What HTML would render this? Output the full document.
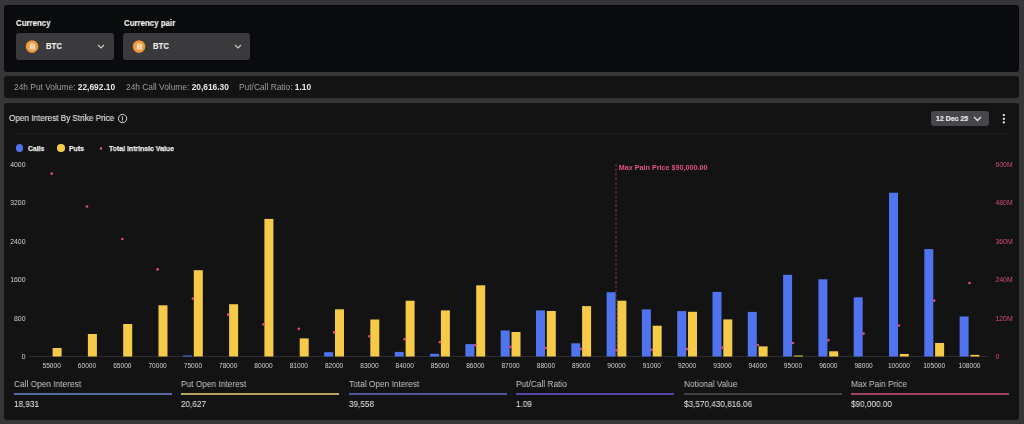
<!DOCTYPE html>
<html><head><meta charset="utf-8">
<style>
html,body{margin:0;padding:0;}
body{width:1024px;height:424px;background:#363638;position:relative;overflow:hidden;font-family:"Liberation Sans",sans-serif;}
.p{position:absolute;border-radius:3px;}
.t{position:absolute;white-space:nowrap;line-height:1;will-change:transform;}
svg{will-change:transform;}
.dd{position:absolute;top:33.3px;height:26.4px;background:#3a3a3c;border-radius:3px;}
svg text.xl{font-family:"Liberation Sans",sans-serif;font-size:6.6px;fill:#d2d2d2;}
svg text.yl{font-family:"Liberation Sans",sans-serif;font-size:6.9px;fill:#d2d2d2;}
svg text.yr{font-family:"Liberation Sans",sans-serif;font-size:6.85px;fill:#d24c74;}
svg text.mp{font-family:"Liberation Sans",sans-serif;font-size:8px;font-weight:bold;fill:#e4527c;}
</style></head><body>
<div class="p" style="left:4px;top:5px;width:1015px;height:66.5px;background:#0a0b0d"></div>
<div class="p" style="left:4px;top:76px;width:1015px;height:21.8px;background:#131313"></div>
<div class="p" style="left:4px;top:103px;width:1015px;height:316.6px;background:#131313"></div>
<div class="t" style="left:15.80px;top:18.81px;font-size:9.2px;font-weight:bold;-webkit-text-stroke:0.2px #f0f0f0;color:#f0f0f0;transform:scaleX(0.857);transform-origin:0 0;">Currency</div>
<div class="t" style="left:123.50px;top:18.81px;font-size:9.2px;font-weight:bold;-webkit-text-stroke:0.2px #f0f0f0;color:#f0f0f0;transform:scaleX(0.857);transform-origin:0 0;">Currency pair</div>
<div class="dd" style="left:16px;width:98px"></div>
<div class="dd" style="left:123px;width:127px"></div>
<div style="position:absolute;left:25px;top:39px;line-height:0"><svg width="14" height="15" viewBox="0 0 14 15"><defs><radialGradient id="bg1" cx="50%" cy="50%" r="50%"><stop offset="0%" stop-color="#f8bc7c"/><stop offset="60%" stop-color="#f0a04c"/><stop offset="100%" stop-color="#e88e34"/></radialGradient></defs><circle cx="7" cy="7.6" r="6.35" fill="url(#bg1)"/><text x="0" y="0" transform="translate(7.1,10.5) rotate(8)" text-anchor="middle" font-family="Liberation Sans, sans-serif" font-weight="bold" font-size="8.2" fill="#fdebd6">B</text></svg></div>
<div style="position:absolute;left:132.3px;top:39px;line-height:0"><svg width="14" height="15" viewBox="0 0 14 15"><defs><radialGradient id="bg2" cx="50%" cy="50%" r="50%"><stop offset="0%" stop-color="#f8bc7c"/><stop offset="60%" stop-color="#f0a04c"/><stop offset="100%" stop-color="#e88e34"/></radialGradient></defs><circle cx="7" cy="7.6" r="6.35" fill="url(#bg2)"/><text x="0" y="0" transform="translate(7.1,10.5) rotate(8)" text-anchor="middle" font-family="Liberation Sans, sans-serif" font-weight="bold" font-size="8.2" fill="#fdebd6">B</text></svg></div>
<div class="t" style="left:45.60px;top:42.23px;font-size:9.3px;font-weight:bold;-webkit-text-stroke:0.2px #eeeeee;color:#eeeeee;transform:scaleX(0.83);transform-origin:0 0;">BTC</div>
<div class="t" style="left:152.70px;top:42.23px;font-size:9.3px;font-weight:bold;-webkit-text-stroke:0.2px #eeeeee;color:#eeeeee;transform:scaleX(0.83);transform-origin:0 0;">BTC</div>
<div style="position:absolute;left:97px;top:44px;line-height:0"><svg width="8" height="5" viewBox="0 0 8 5"><path d="M1 1 L4 4 L7 1" stroke="#c8c8c8" stroke-width="1.2" fill="none"/></svg></div>
<div style="position:absolute;left:233.5px;top:44px;line-height:0"><svg width="8" height="5" viewBox="0 0 8 5"><path d="M1 1 L4 4 L7 1" stroke="#c8c8c8" stroke-width="1.2" fill="none"/></svg></div>
<div class="t" style="left:13.75px;top:83.49px;font-size:8.4px;color:#9c9c9c;">24h Put Volume: <span style="color:#e8e8e8;font-weight:bold">22,692.10</span></div>
<div class="t" style="left:125.70px;top:83.49px;font-size:8.4px;color:#9c9c9c;">24h Call Volume: <span style="color:#e8e8e8;font-weight:bold">20,616.30</span></div>
<div class="t" style="left:239.00px;top:83.49px;font-size:8.4px;color:#9c9c9c;">Put/Call Ratio: <span style="color:#e8e8e8;font-weight:bold">1.10</span></div>
<div class="t" style="left:8.70px;top:114.42px;font-size:8.6px;-webkit-text-stroke:0.1px #e8e8e8;color:#e8e8e8;transform:scaleX(0.95);transform-origin:0 0;">Open Interest By Strike Price</div>
<svg style="position:absolute;left:117px;top:113.2px" width="11" height="11" viewBox="0 0 11 11"><circle cx="5.55" cy="5.55" r="4.15" fill="none" stroke="#d4d4d4" stroke-width="1"/><rect x="5.1" y="3.3" width="0.9" height="4.0" fill="#d4d4d4"/><rect x="5.1" y="7.7" width="0.9" height="0.9" fill="#d4d4d4"/></svg>
<div style="position:absolute;left:931px;top:111px;width:58px;height:15px;background:#46474b;border-radius:3px"></div>
<div class="t" style="left:936.30px;top:114.57px;font-size:7.6px;font-weight:bold;-webkit-text-stroke:0.2px #ececec;color:#ececec;transform:scaleX(0.92);transform-origin:0 0;">12 Dec 25</div>
<svg style="position:absolute;left:973px;top:116px" width="9" height="6" viewBox="0 0 9 6"><path d="M1 1 L4.5 4.5 L8 1" stroke="#e4e4e4" stroke-width="1.3" fill="none"/></svg>
<svg style="position:absolute;left:0;top:100px" width="1024" height="40" viewBox="0 100 1024 40"><circle cx="1003.8" cy="115.1" r="1.15" fill="#f0f0f0"/><circle cx="1003.8" cy="118.8" r="1.15" fill="#f0f0f0"/><circle cx="1003.8" cy="122.4" r="1.15" fill="#f0f0f0"/><line x1="14" y1="133.9" x2="1009" y2="133.9" stroke="#222224" stroke-width="1"/></svg>
<div style="position:absolute;left:15.8px;top:144.3px;width:7.5px;height:7.5px;border-radius:50%;background:#4f74ee"></div>
<div class="t" style="left:27.90px;top:145.17px;font-size:7.6px;font-weight:bold;-webkit-text-stroke:0.25px #ececec;color:#ececec;transform:scaleX(0.9);transform-origin:0 0;">Calls</div>
<div style="position:absolute;left:57px;top:144.3px;width:7.5px;height:7.5px;border-radius:50%;background:#f5ca48"></div>
<div class="t" style="left:68.90px;top:145.17px;font-size:7.6px;font-weight:bold;-webkit-text-stroke:0.25px #ececec;color:#ececec;transform:scaleX(0.91);transform-origin:0 0;">Puts</div>
<div style="position:absolute;left:99.8px;top:147.2px;width:2.4px;height:2.4px;border-radius:50%;background:#e24d7c"></div>
<div class="t" style="left:109.30px;top:145.17px;font-size:7.6px;font-weight:bold;-webkit-text-stroke:0.25px #ececec;color:#ececec;transform:scaleX(0.913);transform-origin:0 0;">Total Intrinsic Value</div>
<svg style="position:absolute;left:0;top:0" width="1024" height="424" viewBox="0 0 1024 424">
<line x1="29" y1="356.5" x2="988" y2="356.5" stroke="#2c2c2e" stroke-width="1"/>
<line x1="616.0" y1="164" x2="616.0" y2="356.5" stroke="#8e3552" stroke-width="1" stroke-dasharray="2.5,2"/>
<rect x="52.60" y="348.00" width="9.0" height="8.50" fill="#f5ca48"/>
<rect x="87.90" y="334.00" width="9.0" height="22.50" fill="#f5ca48"/>
<rect x="123.20" y="324.00" width="9.0" height="32.50" fill="#f5ca48"/>
<rect x="158.50" y="305.30" width="9.0" height="51.20" fill="#f5ca48"/>
<rect x="183.00" y="355.50" width="9.0" height="1.00" fill="#4f74ee"/>
<rect x="193.80" y="270.20" width="9.0" height="86.30" fill="#f5ca48"/>
<rect x="229.10" y="304.20" width="9.0" height="52.30" fill="#f5ca48"/>
<rect x="264.40" y="218.90" width="9.0" height="137.60" fill="#f5ca48"/>
<rect x="299.70" y="338.40" width="9.0" height="18.10" fill="#f5ca48"/>
<rect x="324.20" y="352.20" width="9.0" height="4.30" fill="#4f74ee"/>
<rect x="335.00" y="309.30" width="9.0" height="47.20" fill="#f5ca48"/>
<rect x="370.30" y="319.50" width="9.0" height="37.00" fill="#f5ca48"/>
<rect x="394.80" y="351.90" width="9.0" height="4.60" fill="#4f74ee"/>
<rect x="405.60" y="300.70" width="9.0" height="55.80" fill="#f5ca48"/>
<rect x="430.10" y="353.80" width="9.0" height="2.70" fill="#4f74ee"/>
<rect x="440.90" y="310.40" width="9.0" height="46.10" fill="#f5ca48"/>
<rect x="465.40" y="344.10" width="9.0" height="12.40" fill="#4f74ee"/>
<rect x="476.20" y="285.30" width="9.0" height="71.20" fill="#f5ca48"/>
<rect x="500.70" y="330.50" width="9.0" height="26.00" fill="#4f74ee"/>
<rect x="511.50" y="332.00" width="9.0" height="24.50" fill="#f5ca48"/>
<rect x="536.00" y="310.40" width="9.0" height="46.10" fill="#4f74ee"/>
<rect x="546.80" y="311.00" width="9.0" height="45.50" fill="#f5ca48"/>
<rect x="571.30" y="343.30" width="9.0" height="13.20" fill="#4f74ee"/>
<rect x="582.10" y="306.10" width="9.0" height="50.40" fill="#f5ca48"/>
<rect x="606.60" y="292.20" width="9.0" height="64.30" fill="#4f74ee"/>
<rect x="617.40" y="300.70" width="9.0" height="55.80" fill="#f5ca48"/>
<rect x="641.90" y="309.40" width="9.0" height="47.10" fill="#4f74ee"/>
<rect x="652.70" y="325.70" width="9.0" height="30.80" fill="#f5ca48"/>
<rect x="677.20" y="311.10" width="9.0" height="45.40" fill="#4f74ee"/>
<rect x="688.00" y="311.80" width="9.0" height="44.70" fill="#f5ca48"/>
<rect x="712.50" y="291.90" width="9.0" height="64.60" fill="#4f74ee"/>
<rect x="723.30" y="319.40" width="9.0" height="37.10" fill="#f5ca48"/>
<rect x="747.80" y="311.90" width="9.0" height="44.60" fill="#4f74ee"/>
<rect x="758.60" y="346.40" width="9.0" height="10.10" fill="#f5ca48"/>
<rect x="783.10" y="274.80" width="9.0" height="81.70" fill="#4f74ee"/>
<rect x="793.90" y="355.50" width="9.0" height="1.00" fill="#f5ca48"/>
<rect x="818.40" y="279.30" width="9.0" height="77.20" fill="#4f74ee"/>
<rect x="829.20" y="351.30" width="9.0" height="5.20" fill="#f5ca48"/>
<rect x="853.70" y="297.30" width="9.0" height="59.20" fill="#4f74ee"/>
<rect x="889.00" y="192.70" width="9.0" height="163.80" fill="#4f74ee"/>
<rect x="899.80" y="354.00" width="9.0" height="2.50" fill="#f5ca48"/>
<rect x="924.30" y="249.10" width="9.0" height="107.40" fill="#4f74ee"/>
<rect x="935.10" y="343.00" width="9.0" height="13.50" fill="#f5ca48"/>
<rect x="959.60" y="316.50" width="9.0" height="40.00" fill="#4f74ee"/>
<rect x="970.40" y="354.90" width="9.0" height="1.60" fill="#f5ca48"/>
<circle cx="51.70" cy="173.70" r="1.35" fill="#dc4c78"/>
<circle cx="87.00" cy="206.50" r="1.35" fill="#dc4c78"/>
<circle cx="122.30" cy="239.00" r="1.35" fill="#dc4c78"/>
<circle cx="157.60" cy="269.40" r="1.35" fill="#dc4c78"/>
<circle cx="192.90" cy="298.60" r="1.35" fill="#dc4c78"/>
<circle cx="228.20" cy="314.70" r="1.35" fill="#dc4c78"/>
<circle cx="263.50" cy="324.30" r="1.35" fill="#dc4c78"/>
<circle cx="298.80" cy="328.80" r="1.35" fill="#dc4c78"/>
<circle cx="334.10" cy="332.40" r="1.35" fill="#dc4c78"/>
<circle cx="369.40" cy="336.30" r="1.35" fill="#dc4c78"/>
<circle cx="404.70" cy="339.20" r="1.35" fill="#dc4c78"/>
<circle cx="440.00" cy="342.20" r="1.35" fill="#dc4c78"/>
<circle cx="475.30" cy="345.10" r="1.35" fill="#dc4c78"/>
<circle cx="510.60" cy="346.90" r="1.35" fill="#dc4c78"/>
<circle cx="545.90" cy="348.00" r="1.35" fill="#dc4c78"/>
<circle cx="581.20" cy="349.00" r="1.35" fill="#dc4c78"/>
<circle cx="616.50" cy="350.30" r="1.35" fill="#dc4c78"/>
<circle cx="651.80" cy="349.80" r="1.35" fill="#dc4c78"/>
<circle cx="687.10" cy="349.10" r="1.35" fill="#dc4c78"/>
<circle cx="722.40" cy="347.70" r="1.35" fill="#dc4c78"/>
<circle cx="757.70" cy="345.10" r="1.35" fill="#dc4c78"/>
<circle cx="793.00" cy="343.00" r="1.35" fill="#dc4c78"/>
<circle cx="828.30" cy="340.20" r="1.35" fill="#dc4c78"/>
<circle cx="863.60" cy="333.60" r="1.35" fill="#dc4c78"/>
<circle cx="898.90" cy="325.50" r="1.35" fill="#dc4c78"/>
<circle cx="934.20" cy="300.60" r="1.35" fill="#dc4c78"/>
<circle cx="969.50" cy="283.00" r="1.35" fill="#dc4c78"/>
<text x="51.70" y="368.2" text-anchor="middle" class="xl">55000</text>
<text x="87.00" y="368.2" text-anchor="middle" class="xl">60000</text>
<text x="122.30" y="368.2" text-anchor="middle" class="xl">65000</text>
<text x="157.60" y="368.2" text-anchor="middle" class="xl">70000</text>
<text x="192.90" y="368.2" text-anchor="middle" class="xl">75000</text>
<text x="228.20" y="368.2" text-anchor="middle" class="xl">78000</text>
<text x="263.50" y="368.2" text-anchor="middle" class="xl">80000</text>
<text x="298.80" y="368.2" text-anchor="middle" class="xl">81000</text>
<text x="334.10" y="368.2" text-anchor="middle" class="xl">82000</text>
<text x="369.40" y="368.2" text-anchor="middle" class="xl">83000</text>
<text x="404.70" y="368.2" text-anchor="middle" class="xl">84000</text>
<text x="440.00" y="368.2" text-anchor="middle" class="xl">85000</text>
<text x="475.30" y="368.2" text-anchor="middle" class="xl">86000</text>
<text x="510.60" y="368.2" text-anchor="middle" class="xl">87000</text>
<text x="545.90" y="368.2" text-anchor="middle" class="xl">88000</text>
<text x="581.20" y="368.2" text-anchor="middle" class="xl">89000</text>
<text x="616.50" y="368.2" text-anchor="middle" class="xl">90000</text>
<text x="651.80" y="368.2" text-anchor="middle" class="xl">91000</text>
<text x="687.10" y="368.2" text-anchor="middle" class="xl">92000</text>
<text x="722.40" y="368.2" text-anchor="middle" class="xl">93000</text>
<text x="757.70" y="368.2" text-anchor="middle" class="xl">94000</text>
<text x="793.00" y="368.2" text-anchor="middle" class="xl">95000</text>
<text x="828.30" y="368.2" text-anchor="middle" class="xl">96000</text>
<text x="863.60" y="368.2" text-anchor="middle" class="xl">98000</text>
<text x="898.90" y="368.2" text-anchor="middle" class="xl">100000</text>
<text x="934.20" y="368.2" text-anchor="middle" class="xl">105000</text>
<text x="969.50" y="368.2" text-anchor="middle" class="xl">108000</text>
<text x="25.5" y="359.30" text-anchor="end" class="yl">0</text>
<text x="25.5" y="320.80" text-anchor="end" class="yl">800</text>
<text x="25.5" y="282.30" text-anchor="end" class="yl">1600</text>
<text x="25.5" y="243.80" text-anchor="end" class="yl">2400</text>
<text x="25.5" y="205.30" text-anchor="end" class="yl">3200</text>
<text x="25.5" y="166.80" text-anchor="end" class="yl">4000</text>
<text x="995.5" y="359.30" class="yr">0</text>
<text x="995.5" y="320.80" class="yr">120M</text>
<text x="995.5" y="282.30" class="yr">240M</text>
<text x="995.5" y="243.80" class="yr">360M</text>
<text x="995.5" y="205.30" class="yr">480M</text>
<text x="995.5" y="166.80" class="yr">600M</text>
<text transform="translate(618.7,169.5) scale(0.9,1)" class="mp">Max Pain Price $90,000.00</text>
</svg>
<div class="t" style="left:13.60px;top:380.48px;font-size:9.0px;color:#c4c4c4;transform:scaleX(0.925);transform-origin:0 0;">Call Open Interest</div>
<div style="position:absolute;left:13.60px;top:393px;width:158px;height:2px;background:#5868a4"></div>
<div class="t" style="left:13.60px;top:399.72px;font-size:8.6px;color:#ececec;transform:scaleX(0.95);transform-origin:0 0;">18,931</div>
<div class="t" style="left:181.10px;top:380.48px;font-size:9.0px;color:#c4c4c4;transform:scaleX(0.925);transform-origin:0 0;">Put Open Interest</div>
<div style="position:absolute;left:181.10px;top:393px;width:158px;height:2px;background:#b4a660"></div>
<div class="t" style="left:181.10px;top:399.72px;font-size:8.6px;color:#ececec;transform:scaleX(0.95);transform-origin:0 0;">20,627</div>
<div class="t" style="left:348.60px;top:380.48px;font-size:9.0px;color:#c4c4c4;transform:scaleX(0.925);transform-origin:0 0;">Total Open Interest</div>
<div style="position:absolute;left:348.60px;top:393px;width:158px;height:2px;background:#4e579a"></div>
<div class="t" style="left:348.60px;top:399.72px;font-size:8.6px;color:#ececec;transform:scaleX(0.95);transform-origin:0 0;">39,558</div>
<div class="t" style="left:516.10px;top:380.48px;font-size:9.0px;color:#c4c4c4;transform:scaleX(0.925);transform-origin:0 0;">Put/Call Ratio</div>
<div style="position:absolute;left:516.10px;top:393px;width:158px;height:2px;background:#5846a8"></div>
<div class="t" style="left:516.10px;top:399.72px;font-size:8.6px;color:#ececec;transform:scaleX(0.95);transform-origin:0 0;">1.09</div>
<div class="t" style="left:683.60px;top:380.48px;font-size:9.0px;color:#c4c4c4;transform:scaleX(0.925);transform-origin:0 0;">Notional Value</div>
<div style="position:absolute;left:683.60px;top:393px;width:158px;height:2px;background:#424244"></div>
<div class="t" style="left:683.60px;top:399.72px;font-size:8.6px;color:#ececec;transform:scaleX(0.95);transform-origin:0 0;">$3,570,430,816.06</div>
<div class="t" style="left:851.10px;top:380.48px;font-size:9.0px;color:#c4c4c4;transform:scaleX(0.925);transform-origin:0 0;">Max Pain Price</div>
<div style="position:absolute;left:851.10px;top:393px;width:158px;height:2px;background:#a24462"></div>
<div class="t" style="left:851.10px;top:399.72px;font-size:8.6px;color:#ececec;transform:scaleX(0.95);transform-origin:0 0;">$90,000.00</div>
</body></html>
